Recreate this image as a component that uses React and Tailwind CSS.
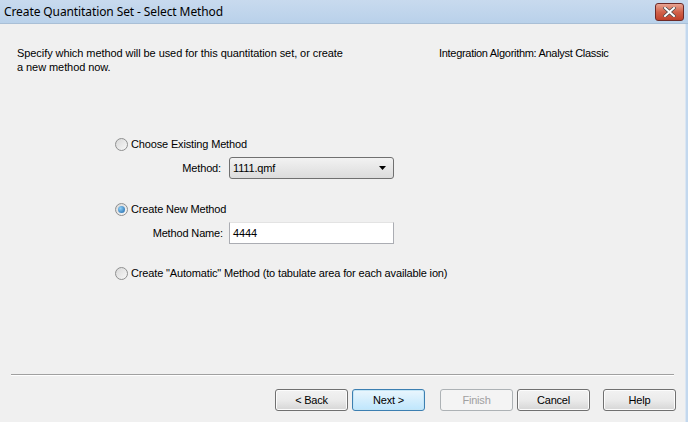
import React from 'react';

function Radio({ checked }) {
  return (
    <span className="relative w-[13px] h-[13px] rounded-full border border-[#8e8f8f] bg-gradient-to-br from-[#d8d8d8] to-[#f8f8f8] flex items-center justify-center shrink-0">
      {checked && (
        <span className="w-[7px] h-[7px] rounded-full bg-[radial-gradient(circle_at_35%_35%,#8fd0f7,#1a62a6)]" />
      )}
    </span>
  );
}

function Btn({ children, primary, disabled, className = '' }) {
  return (
    <div
      className={
        'h-[22px] w-[73px] rounded-[3px] border flex items-center justify-center ' +
        (disabled
          ? 'border-[#adb2b5] bg-[#f4f4f4] text-[#a0a0a0] '
          : primary
            ? 'border-[#3c7fb1] bg-gradient-to-b from-[#eaf6fd] to-[#bee6fd] text-black shadow-[inset_0_0_0_1px_#c4e5f6] '
            : 'border-[#707070] bg-gradient-to-b from-[#f2f2f2] via-[#ebebeb] to-[#d6d6d6] text-black shadow-[inset_0_0_0_1px_#fcfcfc] ') +
        className
      }
    >
      {children}
    </div>
  );
}

export default function App() {
  return (
    <div className="w-[688px] h-[422px] flex flex-col bg-[#f0f0f0] text-[11px] text-black font-['Liberation_Sans',Arial,sans-serif] overflow-hidden">
      {/* title bar */}
      <div className="h-[24px] shrink-0 flex items-center justify-between bg-gradient-to-b from-[#c8daee] to-[#b9d1ea] pl-[4px] pr-[5px] border-b border-[#a9bfd6]">
        <span className="text-[12px] text-black font-['Noto_Sans','Open_Sans',sans-serif] tracking-[-0.1px]">
          Create Quantitation Set - Select Method
        </span>
        <div className="w-[29px] h-[18px] rounded-[3px] border border-[#6d2a27] bg-gradient-to-b from-[#e8a493] via-[#d1624a] to-[#c0402a] flex items-center justify-center mr-[-1px]">
          <svg width="13" height="10" viewBox="0 0 13 10">
            <path d="M2 1 L11 9 M11 1 L2 9" stroke="#4a4a4a" strokeWidth="3.4" strokeLinecap="square" />
            <path d="M2 1 L11 9 M11 1 L2 9" stroke="#ffffff" strokeWidth="2" strokeLinecap="square" />
          </svg>
        </div>
      </div>

      <div className="flex flex-1 min-h-0">
        <div className="flex-1 flex flex-col">
          {/* header text */}
          <div className="flex pt-[22px] pl-[17px] leading-[14px]">
            <p className="w-[422px] tracking-[-0.07px]">
              Specify which method will be used for this quantitation set, or create
              <br />a new method now.
            </p>
            <p className="tracking-[-0.3px]">Integration Algorithm: Analyst Classic</p>
          </div>

          {/* options */}
          <div className="flex flex-col pl-[115px] pt-[63px] tracking-[-0.15px]">
            <label className="flex items-center gap-[3px] h-[14px]">
              <Radio />
              <span>Choose Existing Method</span>
            </label>
            <div className="flex items-center mt-[6px] h-[22px]">
              <span className="w-[114px] text-right pr-[8px]">Method:</span>
              <div className="w-[165px] h-[22px] rounded-[3px] border border-[#707070] bg-gradient-to-b from-[#f2f2f2] to-[#dcdcdc] flex items-center justify-between pl-[3px] pr-[6px]">
                <span>1111.qmf</span>
                <svg width="8" height="4" viewBox="0 0 8 4">
                  <path d="M0 0 H7 L3.5 4 Z" fill="#000" />
                </svg>
              </div>
            </div>

            <label className="flex items-center gap-[3px] h-[14px] mt-[23px]">
              <Radio checked />
              <span>Create New Method</span>
            </label>
            <div className="flex items-center mt-[6px] h-[22px]">
              <span className="w-[116px] text-right pr-[8px]">Method Name:</span>
              <div className="w-[165px] h-[22px] border border-[#abadb3] border-t-[#e3e3e3] bg-white flex items-center pl-[3px] ml-[-2px]">
                4444
              </div>
            </div>

            <label className="flex items-center gap-[3px] h-[14px] mt-[22px]">
              <Radio />
              <span>Create "Automatic" Method (to tabulate area for each available ion)</span>
            </label>
          </div>

          <div className="flex-1" />

          {/* separator */}
          <div className="mx-[11px] border-t border-[#a0a0a0] border-b-white border-b" />

          {/* buttons */}
          <div className="flex items-center justify-end pt-[13px] pb-[11px] pr-[9px] tracking-[-0.2px]">
            <Btn>&lt; Back</Btn>
            <Btn primary className="ml-[4px]">Next &gt;</Btn>
            <Btn disabled className="ml-[15px]">Finish</Btn>
            <Btn className="ml-[4px]">Cancel</Btn>
            <Btn className="ml-[13px]">Help</Btn>
          </div>
        </div>
        <div className="w-[3px] bg-[#c3d8ee] border-l border-[#dbe6f2]" />
      </div>
    </div>
  );
}
